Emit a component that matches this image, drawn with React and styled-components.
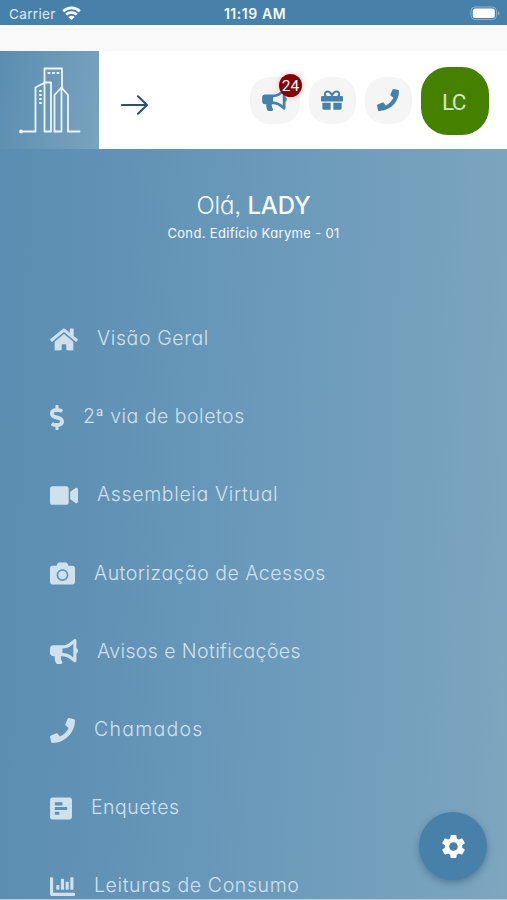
import React from "react";
import styled, { createGlobalStyle } from "styled-components";
import {
  FaHome, FaDollarSign, FaVideo, FaCamera, FaBullhorn, FaPhone, FaPollH, FaChartBar, FaGift,
} from "react-icons/fa";
import { MdSettings } from "react-icons/md";

const GlobalStyle = createGlobalStyle`
  * { box-sizing: border-box; }
  body { margin: 0; overflow: hidden; font-family: Inter, "Open Sans", sans-serif; }
`;

const Screen = styled.div`
  position: relative;
  display: flex;
  flex-direction: column;
  width: 507px;
  height: 900px;
  overflow: hidden;
  background: #fff;
`;

const StatusBar = styled.header`
  display: grid;
  grid-template-columns: 1fr auto 1fr;
  align-items: center;
  flex: none;
  height: 25px;
  padding: 2px 6px 0 9px;
  background: #4780a8;
  color: #f4f8fb;
`;

const Carrier = styled.div`
  display: flex;
  align-items: center;
  gap: 6px;
  color: #dce9f2;
  font-size: 13.6px;
  letter-spacing: 0.3px;
`;

const Clock = styled.div`
  font-size: 14px;
  font-weight: 600;
  letter-spacing: 0.55px;
`;

const BatteryIcon = styled.svg`
  justify-self: end;
`;

const Notch = styled.div`
  flex: none;
  height: 26px;
  background: #f9f9f9;
  border-top: 2px solid #fff;
`;

const TopBar = styled.div`
  display: flex;
  flex: none;
  height: 98px;
  background: #fff;
`;

const Logo = styled.div`
  display: flex;
  flex: none;
  width: 99px;
  height: 98px;
  background: linear-gradient(100deg, #5a8db1, #7aa4bf);
`;

const MenuButton = styled.button`
  display: flex;
  align-items: center;
  margin: 10px auto 0 22px;
  padding: 0;
  border: 0;
  background: none;
`;

const Actions = styled.div`
  display: flex;
  align-items: center;
  padding: 1px 18px 0 0;
`;

const ActionButton = styled.button`
  position: relative;
  display: flex;
  align-items: center;
  justify-content: center;
  width: ${(p) => p.$width}px;
  height: 47px;
  margin-right: 9px;
  padding: 0 ${(p) => p.$shift || 0}px 2px 0;
  border: 0;
  border-radius: 20px;
  background: #f5f5f5;
  color: #4780a8;

  svg {
    width: ${(p) => p.$icon}px;
    height: 22px;
  }
`;

const Badge = styled.span`
  position: absolute;
  top: -3px;
  right: -2px;
  width: 23px;
  height: 23px;
  border-radius: 50%;
  background: #850004;
  box-shadow: 0 0 6px rgba(255, 70, 70, 0.35);
  color: #fff;
  font: 15.5px/25px Roboto, sans-serif;
  text-align: center;
`;

const Avatar = styled.div`
  width: 68px;
  height: 68px;
  padding-right: 3px;
  border-radius: 27px;
  background: #458000;
  color: #d5e6c3;
  font: 22.5px/71px Roboto, sans-serif;
  letter-spacing: -1.5px;
  text-align: center;
`;

const Drawer = styled.main`
  flex: 1;
  min-height: 0;
  overflow: hidden;
  background: linear-gradient(92deg, #5a8db1 0%, #6a99ba 50%, #7da6bf 100%);
  border-bottom: 1px solid #b4cddd;
  font-feature-settings: "cv11", "ss03";
`;

const Greeting = styled.div`
  display: flex;
  flex-direction: column;
  align-items: center;
  height: 150px;
  padding-top: 40px;
  color: #f4faff;
`;

const Hello = styled.h1`
  margin: 0;
  font-size: 24px;
  line-height: 34px;
  font-weight: 350;
  letter-spacing: -0.15px;
  white-space: nowrap;

  strong { font-weight: 500; }
`;

const Condo = styled.p`
  margin: 1px 0 0;
  font-size: 13px;
  line-height: 19px;
  letter-spacing: 0.33px;
  white-space: nowrap;
`;

const Menu = styled.nav`
  display: flex;
  flex-direction: column;
`;

const MenuItem = styled.a`
  display: flex;
  align-items: center;
  flex: none;
  gap: 19px;
  height: 78.2px;
  padding-left: 50px;
  color: #cfe1ed;

  svg {
    flex: none;
    width: ${(p) => p.$icon}px;
    height: 25px;
    margin-top: 2px;
  }
`;

const Label = styled.span`
  font-size: 19.5px;
  line-height: 30px;
  font-weight: 350;
  letter-spacing: ${(p) => p.$spacing}px;
  white-space: nowrap;
`;

const SettingsButton = styled.button`
  position: absolute;
  right: 20px;
  bottom: 20px;
  display: flex;
  align-items: center;
  justify-content: center;
  width: 68px;
  height: 68px;
  padding: 0;
  border: 0;
  border-radius: 50%;
  background: #4780a8;
  box-shadow: 0 3px 7px rgba(25, 60, 90, 0.4);
  color: #fff;
`;

const items = [
  { icon: FaHome, width: 28, label: "Visão Geral", spacing: 0.6 },
  { icon: FaDollarSign, width: 14, label: "2ª via de boletos", spacing: 0.5 },
  { icon: FaVideo, width: 28, label: "Assembleia Virtual", spacing: 0.65 },
  { icon: FaCamera, width: 25, label: "Autorização de Acessos", spacing: 0.5 },
  { icon: FaBullhorn, width: 28, label: "Avisos e Notificações", spacing: 0.4 },
  { icon: FaPhone, width: 25, label: "Chamados", spacing: 1.25 },
  { icon: FaPollH, width: 22, label: "Enquetes", spacing: 0.5 },
  { icon: FaChartBar, width: 25, label: "Leituras de Consumo", spacing: 0.6 },
];

const WifiIcon = () => (
  <svg width="19" height="15" viewBox="0 0 19 15" fill="none" stroke="#fff" strokeWidth="2.7">
    <path d="M1.2 5.2C6 .8 13 .8 17.8 5.2" />
    <path d="M4.2 8.6c3-2.8 7.6-2.8 10.6 0" />
    <path d="M9.5 14 6.4 11c1.8-1.6 4.4-1.6 6.2 0z" fill="#fff" stroke="none" />
  </svg>
);

const Battery = () => (
  <BatteryIcon width="31" height="15" viewBox="0 0 31 15">
    <rect x="1" y="1" width="25.5" height="12.5" rx="4" fill="none" stroke="#8db1ca" strokeWidth="1" />
    <rect x="2.8" y="2.6" width="22" height="9.4" rx="2.5" fill="#fff" />
    <path d="M28 5.2v4.2c2-.6 2-3.6 0-4.2z" fill="#8db1ca" />
  </BatteryIcon>
);

const Buildings = () => (
  <svg width="99" height="98" viewBox="0 0 99 98" fill="none" stroke="#eef6fc" strokeWidth="1.8" strokeLinejoin="round" strokeLinecap="round">
    <path d="M21 80.5h14.5v-44l9.500-5h6v49h-6.500V17.500H62V37" />
    <path d="M54.500 80.500V44l7-7.500 6.500 7.500v36.500h11.500" />
    <path d="M61.500 37v43.500h-7" />
    <path d="M48.500 22h1M53 22h1M57.500 22h1M40 40h1M40 44h1M40 48h1M40 52h1" strokeWidth="2.2" />
    <circle cx="21" cy="80.5" r="1" fill="#eef6fc" />
  </svg>
);

const ArrowRight = () => (
  <svg width="28" height="22" viewBox="0 0 28 22" fill="none" stroke="#2d5078" strokeWidth="2.1" strokeLinecap="round" strokeLinejoin="round">
    <path d="M1 11h25M17 2.300l9 8.700-9 8.700" />
  </svg>
);

export default function App() {
  return (
    <Screen>
      <GlobalStyle />
      <StatusBar>
        <Carrier>Carrier <WifiIcon /></Carrier>
        <Clock>11:19 AM</Clock>
        <Battery />
      </StatusBar>
      <Notch />
      <TopBar>
        <Logo><Buildings /></Logo>
        <MenuButton aria-label="Menu"><ArrowRight /></MenuButton>
        <Actions>
          <ActionButton $width={50} $icon={25} $shift={2} aria-label="Avisos">
            <FaBullhorn />
            <Badge>24</Badge>
          </ActionButton>
          <ActionButton $width={47} $icon={22} $shift={1} aria-label="Presentes"><FaGift /></ActionButton>
          <ActionButton $width={47} $icon={22} $shift={1} aria-label="Telefone"><FaPhone /></ActionButton>
          <Avatar>LC</Avatar>
        </Actions>
      </TopBar>
      <Drawer>
        <Greeting>
          <Hello>Olá, <strong>LADY</strong></Hello>
          <Condo>Cond. Edifício Karyme - 01</Condo>
        </Greeting>
        <Menu>
          {items.map(({ icon: Icon, width, label, spacing }) => (
            <MenuItem key={label} $icon={width}>
              <Icon />
              <Label $spacing={spacing}>{label}</Label>
            </MenuItem>
          ))}
        </Menu>
      </Drawer>
      <SettingsButton aria-label="Configurações"><MdSettings size={29} /></SettingsButton>
    </Screen>
  );
}
